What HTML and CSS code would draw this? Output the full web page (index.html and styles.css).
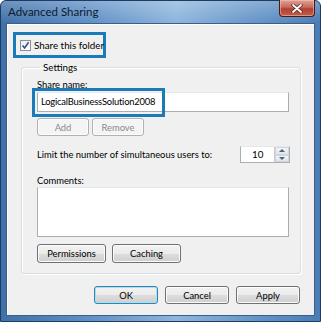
FILE: index.html
```html
<!DOCTYPE html>
<html lang="en">

<head>
    <meta charset="UTF-8" />
    <title>Advanced Sharing</title>
    <link rel="stylesheet" href="styles.css">
</head>

<body>
    <div class="window">
        <div class="titlebar">
            <span class="title">Advanced Sharing</span>
            <button class="close" type="button" aria-label="Close">
                <svg width="12" height="9" viewBox="0 0 12 9">
                    <path d="M2 1 L10 8 M10 1 L2 8" stroke="#5a2a2a" stroke-width="3.4" stroke-linecap="round" />
                    <path d="M2 1 L10 8 M10 1 L2 8" stroke="#ffffff" stroke-width="1.8" stroke-linecap="round" />
                </svg>
            </button>
        </div>

        <div class="client">
            <label class="share-check">
                <span class="checkbox">
                    <svg width="9" height="9" viewBox="0 0 9 9">
                        <path d="M1.5 4.5 L3.6 7 L7.6 1.2" fill="none" stroke="#3a4d8f" stroke-width="1.6" />
                    </svg>
                </span>
                Share this folder
            </label>

            <fieldset class="group">
                <legend>Settings</legend>

                <div class="field-label">Share name:</div>
                <div class="name-wrap">
                    <div class="textbox">LogicalBusinessSolution2008</div>
                    <div class="focus-ring"></div>
                </div>

                <div class="btn-row">
                    <button class="btn small" type="button" disabled>Add</button>
                    <button class="btn small" type="button" disabled>Remove</button>
                </div>

                <div class="limit-row">
                    <span>Limit the number of simultaneous users to:</span>
                    <div class="spinner">
                        <span class="spin-value">10</span>
                        <span class="spin-buttons">
                            <span class="spin-up"></span>
                            <span class="spin-down"></span>
                        </span>
                    </div>
                </div>

                <div class="field-label comments">Comments:</div>
                <div class="textarea"></div>

                <div class="btn-row wide">
                    <button class="btn mid" type="button">Permissions</button>
                    <button class="btn mid" type="button">Caching</button>
                </div>
            </fieldset>

            <div class="footer">
                <button class="btn default" type="button">OK</button>
                <button class="btn" type="button">Cancel</button>
                <button class="btn" type="button">Apply</button>
            </div>
        </div>
    </div>
</body>

</html>
```

FILE: styles.css
```css
body {
    margin: 0;
    font-family: Lato, "Open Sans", sans-serif;
    font-size: 9.4px;
    color: #000;
}

.window {
    width: 321px;
    height: 322px;
    box-sizing: border-box;
    border: 1px solid #1d3b63;
    border-radius: 6px 6px 0 0;
    padding: 0 5px 5px 5px;
    display: flex;
    flex-direction: column;
    background:
        linear-gradient(180deg, rgba(255, 255, 255, 0.25), rgba(255, 255, 255, 0) 22px),
        linear-gradient(90deg, #3f70a8 0%, #5b8cc3 25%, #8db5dc 55%, #6c9bcc 75%, #4a7cb6 100%);
}

.titlebar {
    height: 22px;
    display: flex;
    justify-content: space-between;
    align-items: flex-start;
}

.title {
    margin-top: 4px;
    padding-left: 2px;
    font-size: 11.5px;
    color: #0c1a2b;
}

.close {
    margin-top: -1px;
    width: 36px;
    height: 17px;
    padding: 0;
    border: 1px solid #4a1a1a;
    border-top: none;
    border-radius: 0 0 4px 4px;
    background: linear-gradient(180deg, #dfa296 0%, #c76a5a 45%, #b2402e 55%, #c25e48 100%);
    box-shadow: inset 0 0 0 1px rgba(255, 200, 190, 0.5);
    display: flex;
    align-items: center;
    justify-content: center;
}

.client {
    flex: 1;
    background: #f0f0f0;
    border: 1px solid #3d5f86;
    box-shadow: inset 1px 1px 0 #ffffff;
    display: flex;
    flex-direction: column;
}

.share-check {
    margin: 8px 0 0 6px;
    width: 93px;
    height: 26px;
    box-sizing: border-box;
    border: 3px solid #1a7bb8;
    display: flex;
    align-items: center;
    gap: 3px;
    padding-left: 4px;
    white-space: nowrap;
    font-size: 9.8px;
}

.checkbox {
    width: 11px;
    height: 11px;
    flex: none;
    box-sizing: border-box;
    border: 1px solid #8e8f8f;
    background: linear-gradient(135deg, #e8ecf3, #ffffff);
    display: flex;
    align-items: center;
    justify-content: center;
}

.group {
    margin: 2px 13px 0 14px;
    padding: 0 11px 10px 15px;
    border: 1px solid #d5dfe5;
    border-radius: 3px;
    box-shadow: inset 1px 1px 0 #ffffff, 1px 1px 0 #ffffff;
    min-width: 0;
}

.group legend {
    padding: 0 3px;
    margin-left: 3px;
    line-height: 14px;
    font-size: 9.8px;
}

.field-label {
    margin-top: 4px;
    line-height: 13px;
}

.name-wrap {
    position: relative;
    margin-top: 1px;
}

.textbox {
    height: 20px;
    box-sizing: border-box;
    border: 1px solid #abadb3;
    border-top-color: #e3e9ef;
    background: #fff;
    padding-left: 3px;
    line-height: 18px;
    font-size: 9.4px;
    letter-spacing: -0.2px;
}

.focus-ring {
    position: absolute;
    left: -5px;
    top: -4px;
    width: 133px;
    height: 29px;
    box-sizing: border-box;
    border: 3px solid #1a7bb8;
}

.btn-row {
    display: flex;
    gap: 3px;
    margin-top: 6px;
}

.btn-row.wide {
    gap: 6px;
    margin-top: 7px;
}

.btn {
    width: 64px;
    height: 18px;
    padding: 0;
    font: inherit;
    color: #000;
    border: 1px solid #707070;
    border-radius: 3px;
    background: linear-gradient(180deg, #f2f2f2 0%, #ebebeb 50%, #dddddd 51%, #cfcfcf 100%);
    box-shadow: inset 0 0 0 1px #fcfcfc;
}

.btn.small {
    width: 52px;
}

.btn.mid {
    width: 69px;
    height: 19px;
}

.btn:disabled {
    color: #8a8a8a;
    border-color: #adb2b5;
    background: #f4f4f4;
}

.btn.default {
    border-color: #3c7fb1;
    box-shadow: inset 0 0 0 1px #9fe3f9;
}

.limit-row {
    margin-top: 10px;
    display: flex;
    justify-content: space-between;
    align-items: center;
}

.spinner {
    width: 50px;
    height: 17px;
    box-sizing: border-box;
    border: 1px solid #abadb3;
    border-top-color: #e3e9ef;
    background: #fff;
    display: flex;
    margin-right: -1px;
}

.spin-value {
    flex: 1;
    padding-left: 11px;
    line-height: 15px;
    font-size: 9.8px;
}

.spin-buttons {
    width: 14px;
    display: flex;
    flex-direction: column;
    border-left: 1px solid #c7cbd1;
}

.spin-up,
.spin-down {
    flex: 1;
    background: linear-gradient(180deg, #f4f5f7, #dfe3e8);
    border: 1px solid #d2d6db;
    position: relative;
}

.spin-up::after,
.spin-down::after {
    content: "";
    position: absolute;
    left: 3px;
    top: 1px;
    border-left: 3px solid transparent;
    border-right: 3px solid transparent;
}

.spin-up::after {
    border-bottom: 3px solid #4d6185;
}

.spin-down::after {
    border-top: 3px solid #4d6185;
}

.comments {
    margin-top: 12px;
    line-height: 12px;
}

.textarea {
    height: 50px;
    box-sizing: border-box;
    border: 1px solid #abadb3;
    border-top-color: #e3e9ef;
    background: #fff;
}

.footer {
    display: flex;
    justify-content: flex-end;
    gap: 7px;
    margin-top: 12px;
    padding-right: 14px;
}
```
